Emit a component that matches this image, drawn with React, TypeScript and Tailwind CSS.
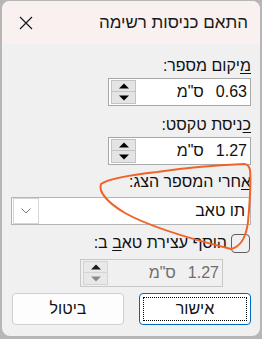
import React from "react";

const font = { fontFamily: '"Liberation Sans", Arial, sans-serif' };

function Tri({ up, color }: { up: boolean; color: string }) {
  return (
    <svg width="10" height="6" viewBox="0 0 10 6">
      {up ? (
        <polygon points="0,5.5 10,5.5 5,0.5" fill={color} />
      ) : (
        <polygon points="0,0.5 10,0.5 5,5.5" fill={color} />
      )}
    </svg>
  );
}

function Spin({ value, disabled }: { value: string; disabled?: boolean }) {
  return (
    <div
      dir="ltr"
      className={`flex h-[28px] w-[143px] items-center border ${
        disabled ? "border-[#c8c8c8] bg-[#f0f0f0]" : "border-[#a8a8a8] bg-white"
      }`}
    >
      <div className="ml-[2px] flex h-[24px] w-[25px] flex-col">
        <div
          className={`flex h-[12px] items-center justify-center border ${
            disabled ? "border-[#d4d4d4] bg-[#e8e8e8]" : "border-[#c4c4c4] bg-[#e4e4e4]"
          }`}
        >
          <Tri up color={disabled ? "#1a1a1a" : "#000"} />
        </div>
        <div
          className={`flex h-[12px] items-center justify-center border border-t-0 ${
            disabled ? "border-[#d4d4d4] bg-[#e8e8e8]" : "border-[#c4c4c4] bg-[#e4e4e4]"
          }`}
        >
          <Tri up={false} color={disabled ? "#8a8a8a" : "#000"} />
        </div>
      </div>
      <div
        dir="rtl"
        className={`flex flex-1 items-center gap-[12px] pr-[3px] text-[16px] ${
          disabled ? "text-[#6d6d6d]" : "text-[#111]"
        }`}
      >
        <span>{value}</span>
        <span>ס"מ</span>
      </div>
    </div>
  );
}

export default function App() {
  return (
    <div className="relative h-[339px] w-[262px] bg-[#b6b6b6] px-[2px] pb-[3px] pt-[1px]" style={font}>
      <div className="flex h-full flex-col overflow-hidden rounded-[8px] bg-[#f0f0f0]">
        <div dir="rtl" className="flex h-[43px] shrink-0 items-center justify-between bg-[#f9f1ef] pl-[17px] pr-[12px]">
          <span className="text-[17px] text-[#1a1a1a]">התאם כניסות רשימה</span>
          <svg width="14" height="14" viewBox="0 0 14 14">
            <path d="M1 1 L13 13 M13 1 L1 13" stroke="#1a1a1a" strokeWidth="1.2" />
          </svg>
        </div>
        <div dir="rtl" className="flex flex-1 flex-col items-start pl-[9px] pr-[9px] pt-[12px] text-[16px] text-[#111]">
          <div className="h-[20px] leading-[20px]">
            <span className="underline underline-offset-2">מ</span>יקום מספר:
          </div>
          <div className="mt-[2px]">
            <Spin value="0.63" />
          </div>
          <div className="mt-[9px] h-[20px] leading-[20px]">
            <span className="underline underline-offset-2">כ</span>ניסת טקסט:
          </div>
          <div className="mt-[2px]">
            <Spin value="1.27" />
          </div>
          <div className="mt-[7px] h-[20px] leading-[20px]">
            <span className="underline underline-offset-2">א</span>חרי המספר הצג:
          </div>
          <div className="mt-[5px] flex h-[28px] w-full items-center justify-between border border-[#b4b4b4] bg-white">
            <span className="pr-[5px]">תו טאב</span>
            <div className="ml-[1px] flex h-[26px] w-[26px] items-center justify-center border border-[#d6d6d6] bg-white">
              <svg width="10" height="6" viewBox="0 0 10 6">
                <path d="M0.5 0.5 L5 5 L9.5 0.5" fill="none" stroke="#7a7a7a" strokeWidth="1" />
              </svg>
            </div>
          </div>
          <div className="mt-[8px] flex h-[20px] items-center gap-[4px]">
            <div className="mr-[1px] h-[19px] w-[19px] rounded-[4px] border border-[#5e5e5e]" />
            <span className="leading-[20px]">
              הוסף עצירת טא<span className="underline underline-offset-2">ב</span> ב:
            </span>
          </div>
          <div className="mr-[28px] mt-[6px]">
            <Spin value="1.27" disabled />
          </div>
          <div className="mt-[6px] flex gap-[15px]">
            <div className="flex h-[32px] w-[112px] items-center justify-center rounded-[4px] border border-[#0067c0] bg-white p-[3px]">
              <div className="flex h-full w-full items-center justify-center border border-dotted border-black">
                אישור
              </div>
            </div>
            <div className="flex h-[32px] w-[112px] items-center justify-center rounded-[4px] border border-[#d0d0d0] bg-[#fdfdfd]">
              ביטול
            </div>
          </div>
        </div>
      </div>
      <svg className="pointer-events-none absolute left-0 top-0" width="262" height="339" viewBox="0 0 262 339">
        <path
          d="M231 249 C240 247, 246 238, 248 222 C250 200, 251 180, 250 170 C249 165, 247 164, 244 164 C220 165, 190 167, 157 172 C130 175, 108 179, 101 184 C98 192, 108 203, 125 213 C150 227, 195 240, 231 249"
          fill="none"
          stroke="#f0642a"
          strokeWidth="2"
          strokeLinecap="round"
        />
      </svg>
    </div>
  );
}
